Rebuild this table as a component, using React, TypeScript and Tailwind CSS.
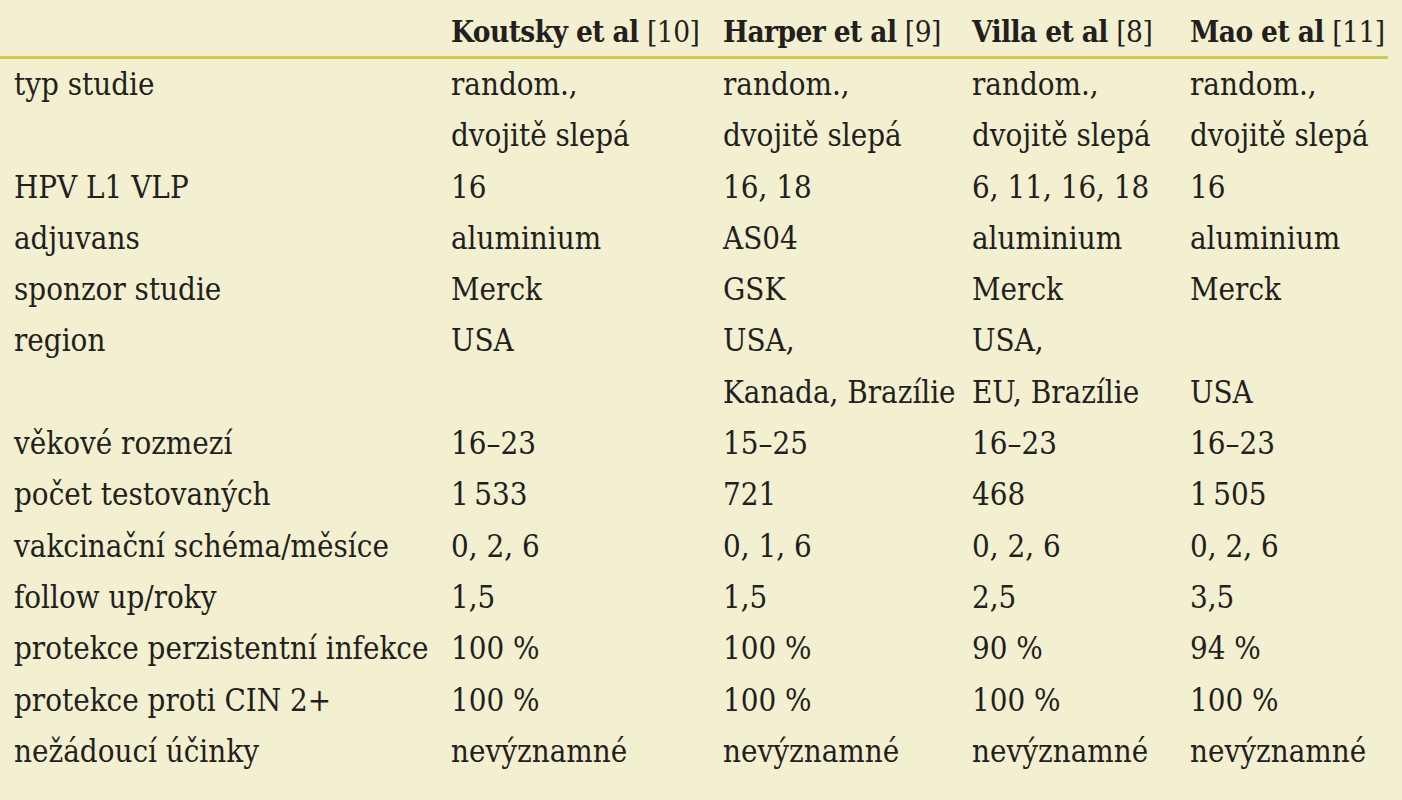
const headers: [string, string][] = [
  ['Koutsky et al', '[10]'],
  ['Harper et al', '[9]'],
  ['Villa et al', '[8]'],
  ['Mao et al', '[11]'],
];

// each row: label, then one cell per study; a cell may hold several lines
const rows: [string, string[][]][] = [
  ['typ studie', [
    ['random.,', 'dvojitě slepá'],
    ['random.,', 'dvojitě slepá'],
    ['random.,', 'dvojitě slepá'],
    ['random.,', 'dvojitě slepá'],
  ]],
  ['HPV L1 VLP', [['16'], ['16, 18'], ['6, 11, 16, 18'], ['16']]],
  ['adjuvans', [['aluminium'], ['AS04'], ['aluminium'], ['aluminium']]],
  ['sponzor studie', [['Merck'], ['GSK'], ['Merck'], ['Merck']]],
  ['region', [['USA', ''], ['USA,', 'Kanada, Brazílie'], ['USA,', 'EU, Brazílie'], ['', 'USA']]],
  ['věkové rozmezí', [['16–23'], ['15–25'], ['16–23'], ['16–23']]],
  ['počet testovaných', [['1\u2009533'], ['721'], ['468'], ['1\u2009505']]],
  ['vakcinační schéma/měsíce', [['0, 2, 6'], ['0, 1, 6'], ['0, 2, 6'], ['0, 2, 6']]],
  ['follow up/roky', [['1,5'], ['1,5'], ['2,5'], ['3,5']]],
  ['protekce perzistentní infekce', [['100 %'], ['100 %'], ['90 %'], ['94 %']]],
  ['protekce proti CIN 2+', [['100 %'], ['100 %'], ['100 %'], ['100 %']]],
  ['nežádoucí účinky', [['nevýznamné'], ['nevýznamné'], ['nevýznamné'], ['nevýznamné']]],
];

const cols = 'grid grid-cols-[437px_272px_249px_218px_1fr]';

export default function App() {
  return (
    <div
      className="w-[1402px] h-[800px] bg-[#f3efd1] text-[#231f1c] text-[31px] overflow-hidden"
      style={{ fontFamily: '"DejaVu Serif", "Liberation Serif", serif', fontStretch: 'condensed' }}
    >
      <div className="pr-[14px]">
        <div className={`${cols} pl-[14px] pt-[12px] pb-[4px] leading-[40px] text-[29.5px] border-b-[3px] border-[#d0c850]`}>
          <div />
          {headers.map(([name, ref]) => (
            <div key={ref} className="whitespace-nowrap">
              <span className="font-bold tracking-[-0.6px]">{name}</span>{' '}
              <span className="tracking-[-0.5px]">{ref}</span>
            </div>
          ))}
        </div>
        <div className="pl-[14px] leading-[51.3px]">
          {rows.map(([label, cells]) => (
            <div key={label} className={cols}>
              <div className="whitespace-nowrap">{label}</div>
              {cells.map((lines, i) => (
                <div key={i} className="whitespace-nowrap">
                  {lines.map((l, j) => (
                    <div key={j} className="h-[51.3px]">{l}</div>
                  ))}
                </div>
              ))}
            </div>
          ))}
        </div>
      </div>
    </div>
  );
}
